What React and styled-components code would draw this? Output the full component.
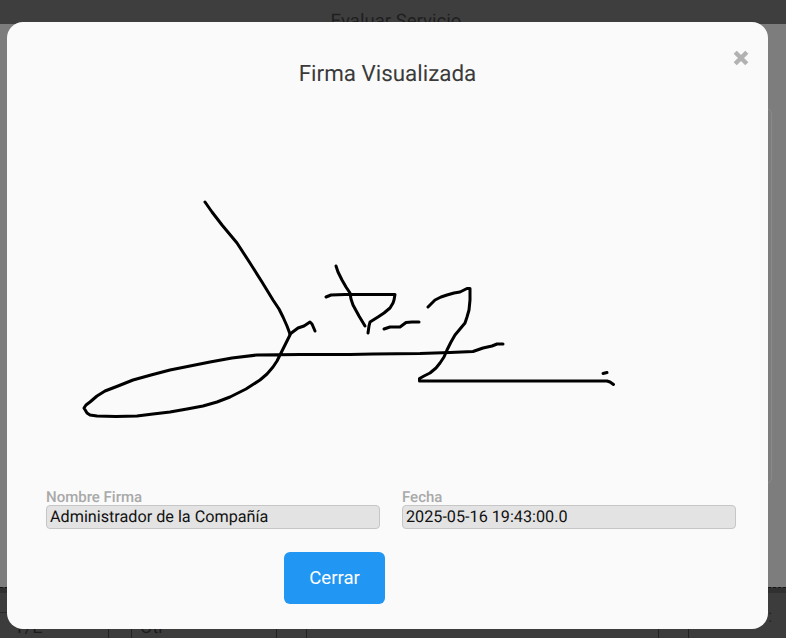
import React from "react";
import styled, { createGlobalStyle } from "styled-components";

const Global = createGlobalStyle`
  html, body { margin: 0; padding: 0; background: #7d7d7d; }
  body { font-family: Roboto, "Liberation Sans", sans-serif; text-rendering: geometricPrecision; }
`;

const Page = styled.div`
  position: relative;
  width: 786px;
  height: 638px;
  overflow: hidden;
  display: flex;
  flex-direction: column;
`;

const TopBar = styled.header`
  height: 24px;
  flex: none;
  box-sizing: border-box;
  padding: 10px 0 0 6px;
  background: #3e3e3e;
  color: #1f1f1f;
  font-size: 18.6px;
  line-height: 22px;
  text-align: center;
  white-space: nowrap;
`;

const Middle = styled.main`
  flex: 1;
  background: #7d7d7d;
  box-sizing: border-box;
  padding: 84px 14px 103px 20px;
`;

const BackCard = styled.div`
  height: 100%;
  box-sizing: border-box;
  border: 1px solid #8a8a8a;
  border-radius: 6px;
`;

const Footer = styled.footer`
  height: 51px;
  flex: none;
  background: #3c3c3c;
  border-top: 1px dashed #161616;
  box-sizing: border-box;
  display: flex;
  flex-direction: column;
`;

const FooterBand = styled.div`
  height: 6px;
  background: #303030;
`;

const FooterSpacer = styled.div`
  height: 22px;
  display: flex;
  align-items: flex-end;
`;

const FooterRule = styled.div`
  width: 10px;
  height: 1px;
  background: #2a2a2a;
`;

const FooterRow = styled.div`
  flex: 1;
  display: grid;
  grid-template-columns: 109px 23px 145px 30px 352px 30px 1fr;
`;

const FooterCell = styled.div`
  border-right: ${(p) => (p.$last ? "none" : "1px solid #222")};
  box-sizing: border-box;
  padding: 4px 0 0 ${(p) => p.$pad || 0}px;
  color: #1c1c1c;
  font-size: 18px;
  line-height: 21px;
  white-space: nowrap;
`;

const Dots = styled.span`
  position: absolute;
  left: 768px;
  top: 606px;
  color: #262626;
  font-size: 18px;
  line-height: 22px;
`;

const Modal = styled.section`
  position: absolute;
  top: 22px;
  left: 7px;
  width: 761px;
  height: 607px;
  box-sizing: border-box;
  padding-top: 39px;
  background: #fafafa;
  border-radius: 16px;
  display: flex;
  flex-direction: column;
`;

const Title = styled.h2`
  margin: 0;
  font-size: 22.4px;
  font-weight: 400;
  line-height: 26px;
  text-align: center;
  color: #3a3a3a;
`;

const CloseButton = styled.button`
  position: absolute;
  top: 26px;
  right: 18px;
  width: 19px;
  height: 19px;
  padding: 0;
  border: 0;
  background: none;
  display: flex;
  align-items: center;
  justify-content: center;
`;

const Signature = styled.svg`
  display: block;
  flex: none;
  width: 761px;
  height: 401px;
`;

const Fields = styled.div`
  display: grid;
  grid-template-columns: 334px 334px;
  column-gap: 22px;
  padding: 0 32px 0 39px;
`;

const Field = styled.div`
  display: flex;
  flex-direction: column;
`;

const Label = styled.label`
  height: 17px;
  font-size: 15px;
  font-weight: 500;
  line-height: 18px;
  color: #a9a9a9;
`;

const Value = styled.div`
  height: 24px;
  box-sizing: border-box;
  padding: 0 3px;
  background: #e3e3e3;
  border: 1px solid #c6c6c6;
  border-radius: 4px;
  font-size: 16.2px;
  line-height: 22px;
  color: #111;
`;

const Actions = styled.div`
  padding: 23px 0 0 277px;
`;

const PrimaryButton = styled.button`
  width: 101px;
  height: 52px;
  border: 0;
  border-radius: 6px;
  background: #2196f3;
  color: #fff;
  font-family: inherit;
  font-size: 18.6px;
  font-weight: 400;
`;

const strokes = [
  "205,202 212,212 222,225 237,243 250,263 262,282 273,300 279,309 283,317 287,326 290,334",
  "290,334 294,331 298,328 304,326 310,322 312,324 315,331",
  "290,335 286,343 280,355 277,361 273,367 267,374 260,380 246,389 230,397 217,402 203,406 187,409 170,412 153,414 137,416 116,416.5 97,416 90,415 87,413 84,408 86,405 90,402 97,396 105,391 118,386 133,380 151,375 170,370 190,366 210,362 232,358 257,355 300,354.5 350,354.5 373,354 420,353.5 450,352.5 473,351.5 483,348 492,346 497,344 503,344",
  "336,266 338,272 342,280 346,287 350,293 351,299 353,305 359,316 365,326",
  "326,297 331,295 345,294.5 395,294.5 394,300 393,303 390,308 384,313 378,317 370,322 369,326 368,333",
  "384,329 390,327 400,327 406,322.5 412,322 419,322",
  "428,307 435,300 441,297 447,295 454,293 460,292 467,288.5 470,288.5 470,300 469,310 467,317 465,323 460,329 455,335 451,342 447,350 444,357 440,363 436,368 430,373 424,376 419.5,378.5 419.5,381 600,381 607,381 610,382 613.5,384.5",
  "603,373.5 607,372.5",
];

export default function App() {
  return (
    <Page>
      <Global />
      <TopBar>Evaluar Servicio</TopBar>
      <Middle>
        <BackCard />
      </Middle>
      <Footer>
        <FooterBand />
        <FooterSpacer>
          <FooterRule />
        </FooterSpacer>
        <FooterRow>
          <FooterCell $pad={14}>T/E</FooterCell>
          <FooterCell />
          <FooterCell $pad={8}>Otr</FooterCell>
          <FooterCell />
          <FooterCell />
          <FooterCell />
          <FooterCell $last />
        </FooterRow>
      </Footer>
      <Dots>:</Dots>
      <Modal role="dialog">
        <Title>Firma Visualizada</Title>
        <CloseButton aria-label="Cerrar">
          <svg width="16" height="16" viewBox="0 0 16 16" fill="none">
            <path d="M2.2 2.2 L13.8 13.8 M13.8 2.2 L2.2 13.8" stroke="#b2b2b2" strokeWidth="4.4" strokeLinecap="butt" />
          </svg>
        </CloseButton>
        <Signature viewBox="7 87 761 401" fill="none">
          {strokes.map((points, i) => (
            <polyline
              key={i}
              points={points}
              stroke="#000"
              strokeWidth="3"
              strokeLinecap="round"
              strokeLinejoin="round"
            />
          ))}
        </Signature>
        <Fields>
          <Field>
            <Label>Nombre Firma</Label>
            <Value>Administrador de la Compañía</Value>
          </Field>
          <Field>
            <Label>Fecha</Label>
            <Value>2025-05-16 19:43:00.0</Value>
          </Field>
        </Fields>
        <Actions>
          <PrimaryButton>Cerrar</PrimaryButton>
        </Actions>
      </Modal>
    </Page>
  );
}
